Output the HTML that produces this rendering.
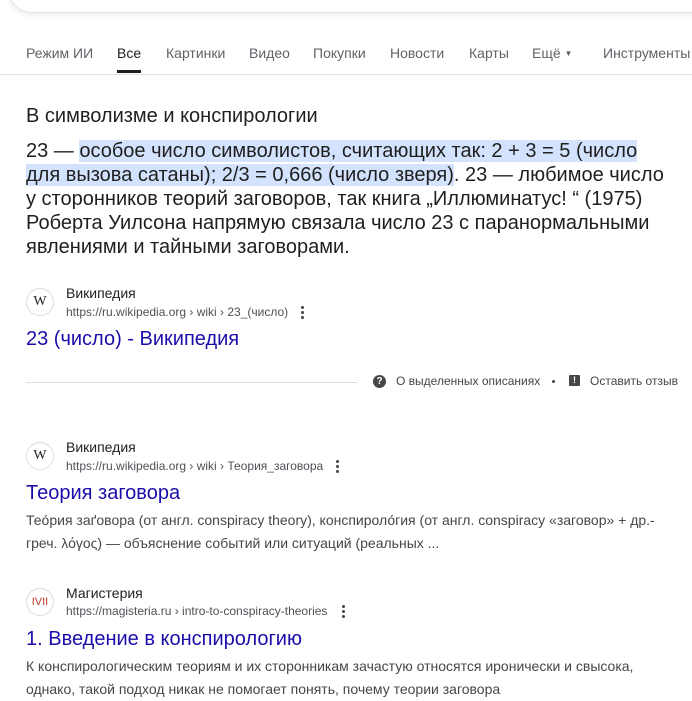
<!DOCTYPE html>
<html><head><meta charset="utf-8"><style>
*{margin:0;padding:0;box-sizing:border-box}
body{width:692px;height:690px;overflow:hidden;background:#fff;font-family:"Liberation Sans",Arial,sans-serif;color:#1f1f1f;position:relative}
.a{position:absolute;white-space:nowrap}
.search{position:absolute;left:8px;top:-40px;width:720px;height:53px;border:1px solid #e5e5e5;border-radius:24px;box-shadow:0 2px 6px rgba(0,0,0,.08)}
.nav{font-size:14px;color:#5f6368;top:45px}
.fav{position:absolute;width:28px;height:28px;border-radius:50%;border:1px solid #dadce0;background:#fff;font-family:"Liberation Serif",serif;font-size:14px;text-align:center;line-height:26px;color:#222}
.st{font-size:14px;color:#202124}
.url{font-size:12px;color:#4d5156}
.lt{font-size:20px;color:#1a0dab}
.dots{position:absolute;width:3px}
.dots i{display:block;width:3px;height:3px;background:#444;border-radius:50%;margin-bottom:2px}
.body{font-size:20px;line-height:24px;color:#1f1f1f}
.hl{background:#d3e3fd}
.sn{font-size:14px;line-height:23px;color:#474747}
</style></head><body>
<div class="search"></div>
<div class="a nav" style="left:26px">Режим ИИ</div>
<div class="a nav" style="left:117px;color:#1f1f1f">Все</div>
<div style="position:absolute;left:117px;top:70px;width:24px;height:3px;background:#1f1f1f"></div>
<div class="a nav" style="left:166px">Картинки</div>
<div class="a nav" style="left:249px">Видео</div>
<div class="a nav" style="left:313px">Покупки</div>
<div class="a nav" style="left:390px">Новости</div>
<div class="a nav" style="left:469px">Карты</div>
<div class="a nav" style="left:532px">Ещё <span style="font-size:8px;vertical-align:2px">▼</span></div>
<div class="a nav" style="left:603px">Инструменты</div>
<div style="position:absolute;left:0;top:74px;width:692px;height:1px;background:#e3e3e3"></div>

<div class="a" style="left:26px;top:105px;font-size:20px">В символизме и конспирологии</div>
<div class="a body" style="left:26px;top:139px">23 — <span class="hl">особое число символистов, считающих так: 2 + 3 = 5 (число</span><br><span class="hl">для вызова сатаны); 2/3 = 0,666 (число зверя)</span>. 23 — любимое число<br>у сторонников теорий заговоров, так книга „Иллюминатус! “ (1975)<br>Роберта Уилсона напрямую связала число 23 с паранормальными<br>явлениями и тайными заговорами.</div>

<div class="fav" style="left:26px;top:288px">W</div>
<div class="a st" style="left:66px;top:285px">Википедия</div>
<div class="a url" style="left:66px;top:305px">https://ru.wikipedia.org › wiki › 23_(число)</div>
<div class="dots" style="left:301px;top:306px"><i></i><i></i><i></i></div>
<div class="a lt" style="left:26px;top:328px">23 (число) - Википедия</div>

<div style="position:absolute;left:26px;top:382px;width:331px;height:1px;background:#dadce0"></div>
<div style="position:absolute;left:373px;top:375px;width:13px;height:13px;border-radius:50%;background:#474747;color:#fff;font-size:10px;font-weight:bold;text-align:center;line-height:13px">?</div>
<div class="a" style="left:396px;top:374px;font-size:12px;color:#474747">О выделенных описаниях</div>
<div style="position:absolute;left:552px;top:380px;width:3px;height:3px;border-radius:50%;background:#474747"></div>
<div style="position:absolute;left:569px;top:375px;width:11px;height:11px;background:#474747;border-radius:1px;color:#fff;font-size:9px;font-weight:bold;text-align:center;line-height:11px">!</div>
<div class="a" style="left:590px;top:374px;font-size:12px;color:#474747">Оставить отзыв</div>

<div class="fav" style="left:26px;top:442px">W</div>
<div class="a st" style="left:66px;top:439px">Википедия</div>
<div class="a url" style="left:66px;top:459px">https://ru.wikipedia.org › wiki › Теория_заговора</div>
<div class="dots" style="left:336px;top:460px"><i></i><i></i><i></i></div>
<div class="a lt" style="left:26px;top:482px">Теория заговора</div>
<div class="a sn" style="left:26px;top:509px">Теóрия заґовора (от англ. conspiracy theory), конспироло́гия (от англ. conspiracy «заговор» + др.-<br>греч. λόγος) — объяснение событий или ситуаций (реальных ...</div>

<div class="fav" style="left:26px;top:588px;color:#c0392b;font-family:'Liberation Sans',sans-serif;font-size:11px">IVII</div>
<div class="a st" style="left:66px;top:585px">Магистерия</div>
<div class="a url" style="left:66px;top:604px">https://magisteria.ru › intro-to-conspiracy-theories</div>
<div class="dots" style="left:342px;top:605px"><i></i><i></i><i></i></div>
<div class="a lt" style="left:26px;top:628px">1. Введение в конспирологию</div>
<div class="a sn" style="left:26px;top:655px">К конспирологическим теориям и их сторонникам зачастую относятся иронически и свысока,<br>однако, такой подход никак не помогает понять, почему теории заговора</div>
</body></html>
